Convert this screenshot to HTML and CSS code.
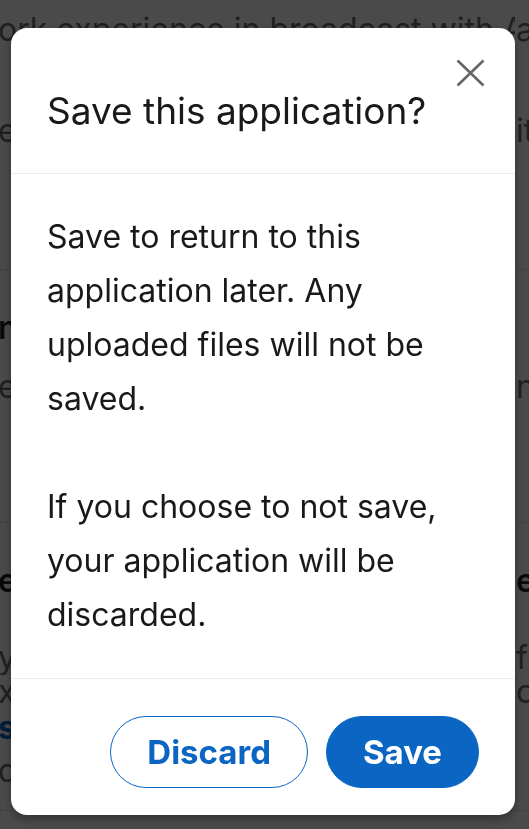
FILE: index.html
```html
<!DOCTYPE html>
<html lang="en">
<head>
<meta charset="utf-8">
<title>Save this application?</title>
<link rel="stylesheet" href="styles.css">
</head>
<body>
  <main class="page">
    <div class="row r1 muted"><span class="l">ork experience in broadcast with Audio</span><span class="r">al</span></div>
    <div class="row r2 muted"><span class="l">e candidates with skills</span><span class="r">it</span></div>
    <hr class="rule h1">
    <div class="row r3 strong"><span class="l">nformation</span><span class="r"></span></div>
    <div class="row r4 muted"><span class="l">e the hiring team</span><span class="r">nt</span></div>
    <hr class="rule h2">
    <div class="row r5 strong"><span class="l">e qualifications</span><span class="r">ei</span></div>
    <div class="row r6 tight muted"><span class="l">y experience with audio</span><span class="r">fu</span></div>
    <div class="row r7 tight muted"><span class="l">xperience in a role</span><span class="r">c</span></div>
    <div class="row r8 tight link"><span class="l">s</span><span class="r"></span></div>
    <div class="row r9 muted"><span class="l">d</span><span class="r"></span></div>
    <hr class="rule h3">
  </main>

  <div class="overlay"></div>

  <section class="modal" role="dialog" aria-labelledby="dlg-title">
    <header class="modal-header">
      <h2 id="dlg-title" class="modal-title">Save this application?</h2>
      <button class="close" aria-label="Dismiss">
        <svg width="29" height="28" viewBox="0 0 29 28" aria-hidden="true">
          <path d="M1.5 1.5 L27.5 26.5 M27.5 1.5 L1.5 26.5" stroke="#666666" stroke-width="2.6" fill="none" stroke-linecap="butt"/>
        </svg>
      </button>
    </header>
    <div class="modal-body">
      <p>Save to return to this application later. Any uploaded files will not be saved.</p>
      <p>If you choose to not save, your application will be discarded.</p>
    </div>
    <footer class="modal-footer">
      <button class="btn btn-secondary">Discard</button>
      <button class="btn btn-primary">Save</button>
    </footer>
  </section>
</body>
</html>
```

FILE: styles.css
```css
* {
  box-sizing: border-box;
}

html, body {
  margin: 0;
  padding: 0;
  height: 100%;
  overflow: hidden;
  background: #ffffff;
  font-family: "Inter", "Noto Sans", "Liberation Sans", sans-serif;
}

/* Background page (dimmed) */
.page {
  padding-top: 10px;
  width: 529px;
  overflow: hidden;
}

.row {
  display: grid;
  grid-template-columns: 515px 14px;
  font-size: 32px;
  line-height: 40px;
  height: 40px;
  white-space: nowrap;
  overflow: hidden;
}

.row .l {
  overflow: hidden;
  margin-left: -2px;
}

.row .r {
  overflow: hidden;
  padding-left: 1px;
}

.row.tight {
  line-height: 34px;
  height: 34px;
}

.muted { color: #6e6e6e; }
.strong { color: #1f1f1f; font-weight: 600; }
.link { color: #0a66c2; font-weight: 700; }

.r2 { margin-top: 61px; }
.h1 { margin-top: 118px; }
.r3 { margin-top: 38px; }
.r4 { margin-top: 19px; }
.h2 { margin-top: 115px; }
.r5 { margin-top: 38px; }
.r6 { margin-top: 40px; }
.r7 { margin-top: 0; }
.r8 { margin-top: 2px; }
.r9 { margin-top: 6px; }
.h3 { margin-top: 19px; }

.rule {
  border: 0;
  border-top: 1px dashed #d6d6d6;
  margin-bottom: 0;
  height: 0;
}

/* Overlay */
.overlay {
  position: fixed;
  inset: 0;
  background: rgba(0, 0, 0, 0.71);
}

/* Modal */
.modal {
  position: fixed;
  top: 28px;
  left: 11px;
  width: 504px;
  background: #ffffff;
  border-radius: 16px;
  box-shadow: 0 4px 10px rgba(0, 0, 0, 0.35);
  color: rgba(0, 0, 0, 0.9);
  overflow: hidden;
}

.modal-header {
  position: relative;
  padding: 60px 36px 39px;
  border-bottom: 1px solid #ebebeb;
}

.modal-title {
  margin: 0;
  font-size: 37px;
  line-height: 46px;
  font-weight: 400;
  color: rgba(0, 0, 0, 0.9);
}

.close {
  position: absolute;
  top: 31px;
  right: 30px;
  padding: 0;
  border: 0;
  background: transparent;
  width: 29px;
  height: 28px;
  display: flex;
}

.modal-body {
  padding: 36px 36px;
  border-bottom: 1px solid #ebebeb;
}

.modal-body p {
  margin: 0;
  font-size: 32px;
  line-height: 54px;
  color: rgba(0, 0, 0, 0.9);
}

.modal-body p + p {
  margin-top: 54px;
}

.modal-footer {
  display: flex;
  justify-content: flex-end;
  gap: 18px;
  padding: 37px 36px 27px;
}

.btn {
  height: 72px;
  border-radius: 36px;
  padding: 0 36px;
  font-family: inherit;
  font-size: 33px;
  font-weight: 700;
  border: 1.5px solid #0a66c2;
  display: flex;
  align-items: center;
  justify-content: center;
}

.btn-secondary {
  background: #ffffff;
  color: #0a66c2;
}

.btn-primary {
  background: #0a66c2;
  color: #ffffff;
}
```
